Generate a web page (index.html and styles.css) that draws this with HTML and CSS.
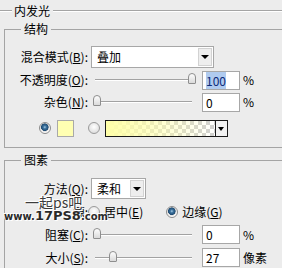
FILE: index.html
```html
<!DOCTYPE html>
<html lang="zh-CN">
<head>
    <meta charset="UTF-8">
    <title>内发光</title>
    <link rel="stylesheet" href="styles.css">
</head>
<body>
    <div class="title">内发光</div>
    <fieldset class="group">
        <legend>结构</legend>
        <div class="row">
            <span class="label">混合模式(<u>B</u>):</span>
            <div class="select select-wide"><span class="select-text">叠加</span><span class="select-btn"></span></div>
        </div>
        <div class="row row-gap">
            <span class="label">不透明度(<u>O</u>):</span>
            <div class="slider"><span class="thumb" style="left: 95px"></span></div>
            <div class="field"><span class="selected">100</span></div>
            <span class="unit">%</span>
        </div>
        <div class="row">
            <span class="label">杂色(<u>N</u>):</span>
            <div class="slider"><span class="thumb" style="left: 0px"></span></div>
            <div class="field">0</div>
            <span class="unit">%</span>
        </div>
        <div class="row row-colors">
            <span class="radio checked radio-first"></span>
            <span class="swatch"></span>
            <span class="radio radio-second"></span>
            <div class="gradient"><span class="gradient-fill"></span><span class="gradient-btn"></span></div>
        </div>
    </fieldset>
    <fieldset class="group group-elements">
        <legend>图素</legend>
        <div class="row row-tall">
            <span class="label">方法(<u>Q</u>):</span>
            <div class="select select-small"><span class="select-text">柔和</span><span class="select-btn"></span></div>
        </div>
        <div class="row row-tall">
            <span class="label">源:</span>
            <span class="radio radio-source"></span>
            <span class="option">居中(<u>E</u>)</span>
            <span class="radio checked radio-edge"></span>
            <span class="option">边缘(<u>G</u>)</span>
        </div>
        <div class="row row-tall">
            <span class="label">阻塞(<u>C</u>):</span>
            <div class="slider"><span class="thumb" style="left: 0px"></span></div>
            <div class="field">0</div>
            <span class="unit">%</span>
        </div>
        <div class="row row-tall">
            <span class="label">大小(<u>S</u>):</span>
            <div class="slider"><span class="thumb" style="left: 16px"></span></div>
            <div class="field">27</div>
            <span class="unit">像素</span>
        </div>
    </fieldset>
    <div class="watermark">
        <div class="wm-top">一起ps吧</div>
        <div class="wm-url"><span class="wm-small">www.</span>17PS8<span class="wm-small">.com</span></div>
    </div>
</body>
</html>
```

FILE: styles.css
```css
body {
    margin: 0;
    width: 282px;
    height: 268px;
    overflow: hidden;
    position: relative;
    background: #ececec;
    font-family: "Noto Sans CJK SC", "DejaVu Sans", sans-serif;
    font-size: 12px;
    line-height: 14px;
    color: #000;
}
u {
    text-decoration: underline;
    text-underline-offset: 1px;
}

/* section header with groove lines */
.title {
    display: flex;
    align-items: center;
    height: 22px;
}
.title::before,
.title::after {
    content: "";
    border-top: 1px solid #a4a4a4;
    border-bottom: 1px solid #fff;
}
.title::before { width: 12px; margin-right: 2px; }
.title::after { flex: 1; margin-left: 3px; }

/* group boxes, right edge runs off the panel */
.group {
    margin: 0 0 0 4px;
    width: 278px;
    min-width: 0;
    box-sizing: border-box;
    padding: 10px 0 9px;
    border: 1px solid #a4a4a4;
    border-right: 0;
}
.group legend {
    margin-left: 16px;
    padding: 0 3px;
    line-height: 14px;
}
.group-elements {
    margin-top: 5px;
    padding-bottom: 0;
}

.row {
    display: flex;
    align-items: center;
    height: 22px;
}
.row-gap { margin-top: 1px; }
.row-tall { height: 23px; }
.row-colors {
    height: 20px;
    margin-top: 5px;
}
.label {
    flex: none;
    width: 83px;
    text-align: right;
    white-space: nowrap;
}

/* dropdowns */
.select {
    display: flex;
    box-sizing: border-box;
    margin-left: 3px;
    background: #fff;
    border: 1px solid #a7a7a7;
}
.select-wide { width: 123px; height: 22px; }
.select-small { width: 55px; height: 21px; }
.select-text {
    flex: 1;
    padding-left: 5px;
    line-height: 19px;
}
.select-btn {
    position: relative;
    width: 14px;
    margin: 1px;
    background: #eeeeee;
    border: 1px solid #d2d2d2;
    box-sizing: border-box;
}
.select-btn::after {
    content: "";
    position: absolute;
    left: 50%;
    top: 50%;
    margin: -2px 0 0 -4px;
    border: 4px solid transparent;
    border-top: 4px solid #000;
    border-bottom: 0;
}

/* sliders */
.slider {
    position: relative;
    flex: none;
    width: 104px;
    height: 100%;
    margin-left: 5px;
}
.slider::before {
    content: "";
    position: absolute;
    left: 2px;
    right: 5px;
    top: 50%;
    margin-top: -1px;
    border-top: 1px solid #a2a2a2;
    border-bottom: 1px solid #fff;
}
.thumb {
    position: absolute;
    top: 50%;
    width: 8px;
    height: 11px;
    margin-top: -7px;
    box-sizing: border-box;
    border: 1px solid #8e8e8e;
    border-radius: 4px 4px 1px 1px;
    background: linear-gradient(#fdfdfd, #dadada);
}

/* numeric fields */
.field {
    flex: none;
    width: 38px;
    height: 19px;
    box-sizing: border-box;
    margin-left: 5px;
    padding-left: 3px;
    background: #fff;
    border: 1px solid #a7a7a7;
    line-height: 17px;
}
.selected {
    background: #b0cbef;
    color: #0c2a78;
}
.unit { margin-left: 3px; }

/* radios */
.radio {
    flex: none;
    width: 12px;
    height: 12px;
    box-sizing: border-box;
    border-radius: 50%;
    border: 1px solid #9a9a9a;
    background: radial-gradient(circle at 50% 40%, #ffffff 0, #dedede 6px);
}
.radio.checked {
    border-color: #8c8c8c;
    background: radial-gradient(circle at 48% 42%, #a8cde6 0, #3f75a0 1.5px, #1d4a72 3.5px, #d8d8d8 4px, #fafafa 5px);
}
.radio-first { margin-left: 34px; }
.radio-second { margin-left: 14px; }
.radio-source { margin-left: 0; }
.radio-edge { margin-left: 23px; }
.option { margin-left: 4px; }

.swatch {
    flex: none;
    width: 17px;
    height: 17px;
    box-sizing: border-box;
    margin-left: 6px;
    background: #ffffb2;
    border: 1px solid #a9a9a9;
}
.gradient {
    display: flex;
    flex: none;
    width: 123px;
    height: 17px;
    box-sizing: border-box;
    margin-left: 5px;
    border: 1px solid #1a1a1a;
}
.gradient-fill {
    flex: 1;
    background:
        linear-gradient(90deg, #ffffa8 0%, rgba(255, 255, 168, 0.6) 45%, rgba(255, 255, 168, 0) 100%),
        repeating-conic-gradient(#d0d0d0 0 25%, #ffffff 0 50%) 0 0 / 8px 8px;
}
.gradient-btn {
    position: relative;
    width: 11px;
    border-left: 1px solid #1a1a1a;
    background: #f2f2f2;
}
.gradient-btn::after {
    content: "";
    position: absolute;
    left: 2px;
    top: 6px;
    border: 3px solid transparent;
    border-top: 4px solid #000;
    border-bottom: 0;
}

/* watermark over the source row */
.watermark {
    position: absolute;
    left: 4px;
    top: 195px;
    color: #2a2a2a;
    text-shadow: 0 0 1px #fff, 0 0 2px #fff, 1px 1px 0 #fff, -1px -1px 0 #fff;
}
.wm-top {
    margin-left: 21px;
    font-size: 14px;
    line-height: 14px;
    color: #3c3c3c;
}
.wm-url {
    font-family: "DejaVu Sans", sans-serif;
    font-weight: bold;
    font-size: 13px;
    line-height: 13px;
}
.wm-small {
    font-size: 10px;
}
```
